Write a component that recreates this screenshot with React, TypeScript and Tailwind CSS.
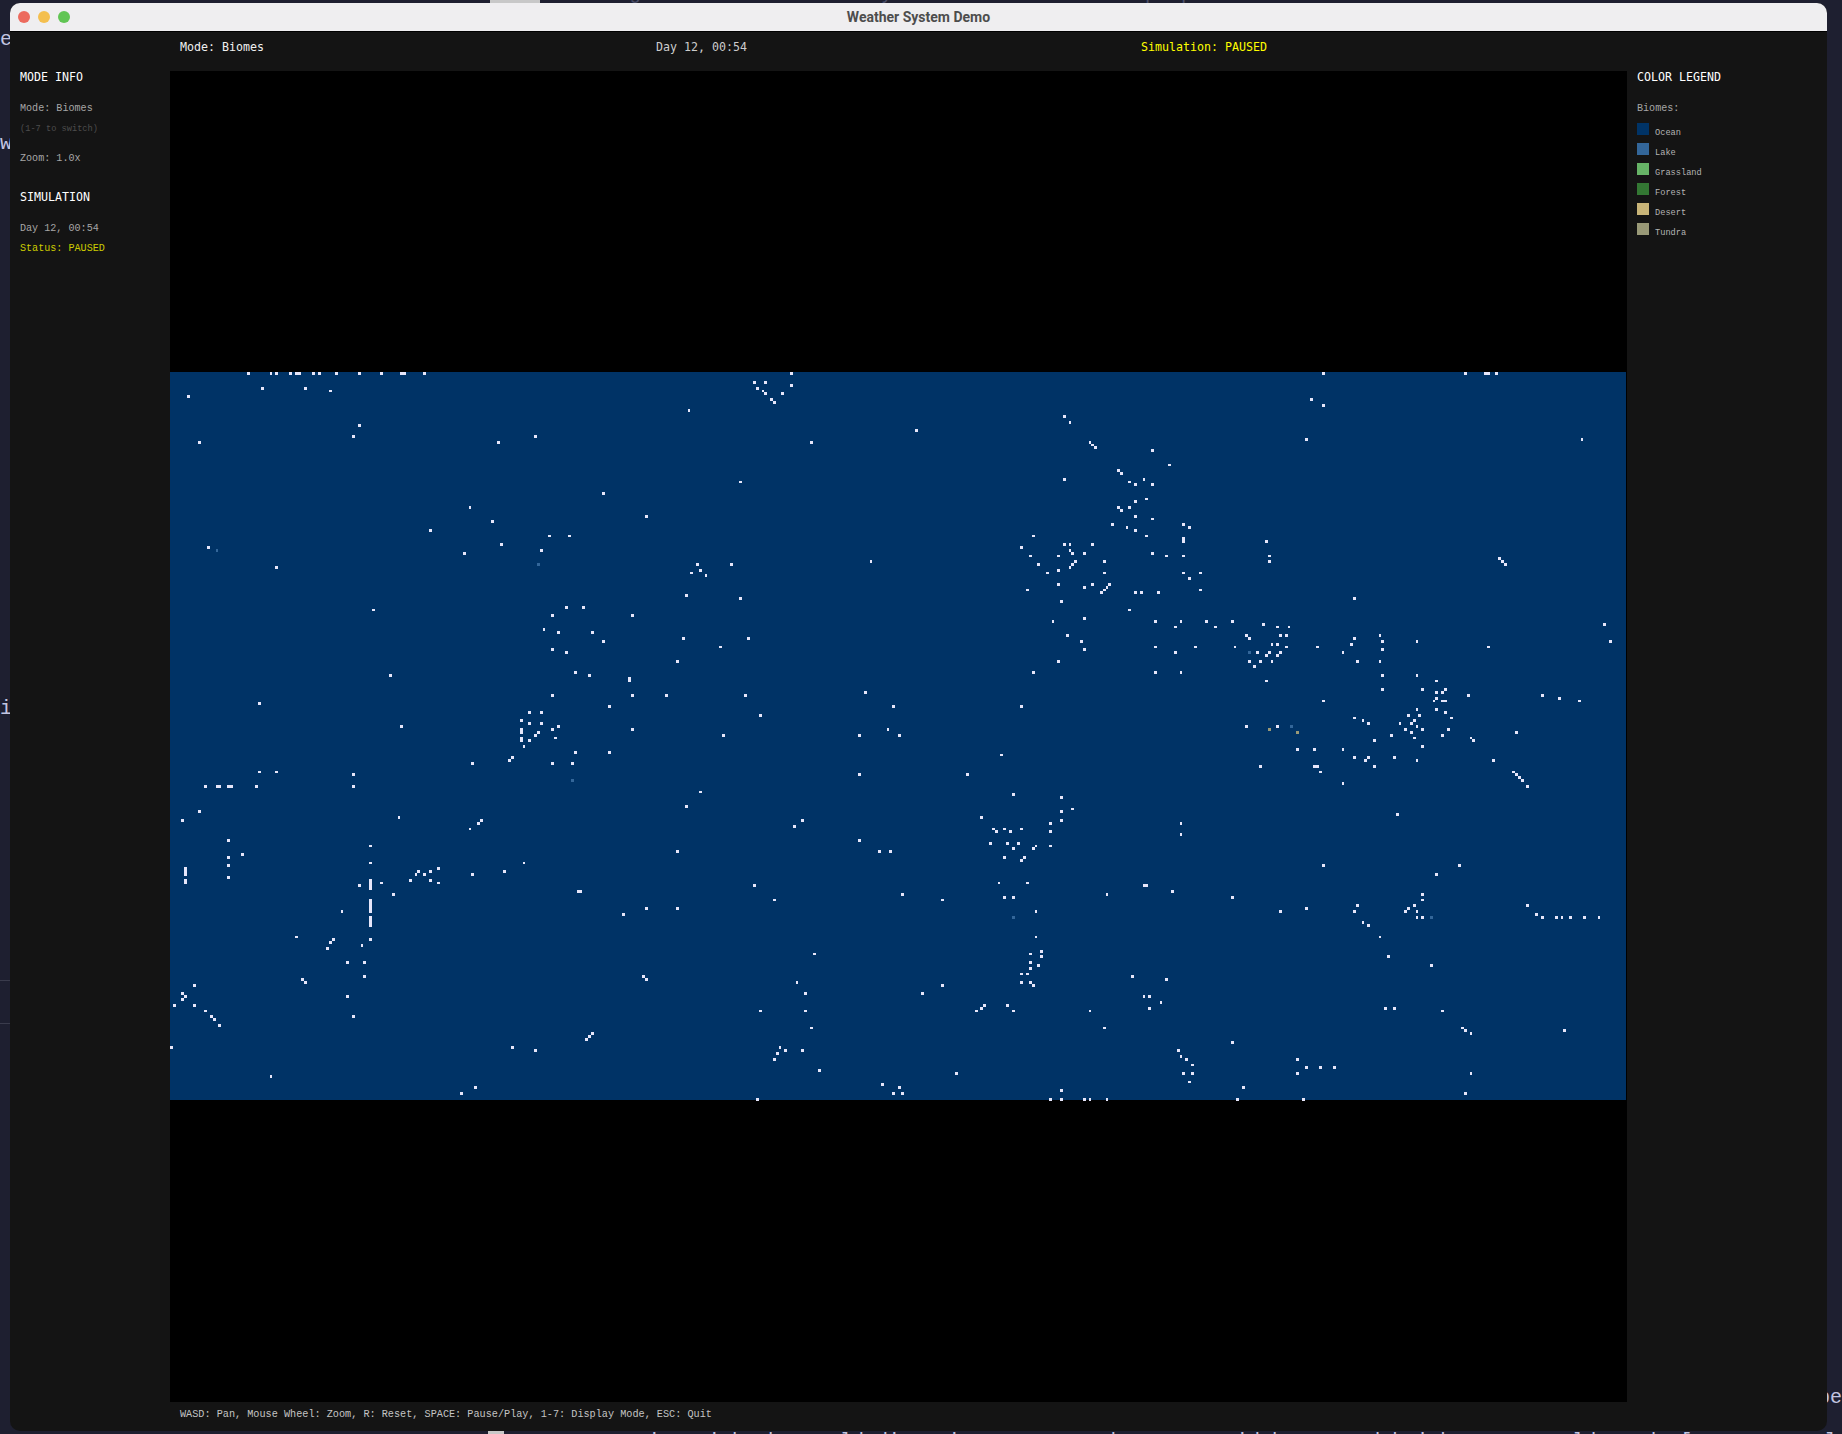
import React from "react";

const S = 2.84375;
type Tile = { ox: number; oy: number; k: number; d: string };

const tiles: Tile[] = [
  { ox: 170, oy: 372, k: 1 / 3, d: "235,4 303,4 319,4 361,4 379,4 388,4 430,4 448,4 499,4 568,4 634,4 694,4 703,4 763,4 277,49 405,49 481,57 55,73 568,160 550,193 88,211 985,211 1096,193 1300,364 1429,433 900,406 967,448 781,475 1138,492 1198,492 115,526 994,517 1114,535 883,543 319,586 610,714 1189,706 1240,706 1147,727 1387,727" },
  { ox: 656, oy: 372, k: 1 / 3, d: "406,4 295,31 328,31 406,40 304,49 319,57 328,64 379,64 346,82 355,91 98,115 781,175 1225,133 1242,151 466,211 1302,211 1309,219 1318,226 1387,295 1396,304 253,330 1225,322 1420,330 1438,337 1438,388 1387,406 1396,415 1420,406 1438,433 1369,457 1411,466 1438,475 1131,492 1096,526 1225,517 1242,517 1309,517 1242,535 1249,543 1285,543 1123,550 1207,550 1258,568 1345,568 644,568 124,577 226,577 1147,577 1249,577 1242,586 133,595 1207,595 106,603 1174,603 1345,603 150,610 91,670 253,679 1207,637 1309,637 1360,637 1285,646 1353,646 1345,654 1114,654 1336,661 1438,661 1455,661 1216,688 1420,714" },
  { ox: 1142, oy: 372, k: 1 / 3, d: "544,4 970,4 1029,4 1037,4 1063,4 508,82 544,100 491,202 1318,202 31,235 82,277 6,322 31,337 13,381 31,441 124,457 142,466 13,492 124,499 124,508 373,508 31,543 73,550 124,550 382,550 382,568 1072,559 1081,568 1090,577 124,603 175,603 142,619 175,654 1,661 49,661 637,679" },
  { ox: 170, oy: 615, k: 1 / 3, d: "1147,3 1387,3 1122,43 1165,52 1267,52 1300,79 1147,103 1189,112 1216,172 1258,181 661,181 1378,189 1378,197 1147,241 1387,241 268,265 1318,274 1078,292 1114,292 1054,316 1078,325 1114,325 694,334 1165,334 1147,343 1387,343 1054,343 1054,351 1105,352 1096,360 1156,367 1054,367 1054,375 1078,376 1062,394 1216,412 1318,412 1027,427 1018,436 907,445 1147,445 1207,445 268,471 319,471 550,478 106,514 139,514 148,514 175,514 184,514 259,514 550,514 88,589 37,616 685,607 934,616 925,625 900,640 175,676 601,692 217,718 175,727" },
  { ox: 656, oy: 615, k: 1 / 3, d: "1285,10 1191,19 1234,61 82,70 277,70 1276,79 193,94 1285,103 64,139 1207,139 1131,172 628,232 31,241 268,241 712,274 1096,274 312,301 696,343 202,360 610,360 730,360 1036,420 610,478 934,478 133,531 1072,538 1216,547 91,574 1249,582 1216,589 976,607 439,616 1216,616 415,633 1183,625 1012,640 1045,640 1096,640 1021,649 1063,649 1183,649 610,676 1003,685 1054,685 1087,685 1138,693 1183,693 1072,700 1131,700 64,709 670,709 703,709 1045,727 1105,727" },
  { ox: 1142, oy: 615, k: 1 / 3, d: "40,19 117,19 193,19 271,19 100,36 219,36 364,28 406,36 441,36 1387,28 313,61 322,70 415,61 433,61 714,61 637,70 721,79 825,79 1405,79 628,87 390,87 406,87 40,94 160,94 279,94 433,94 526,94 1038,94 721,103 100,112 346,112 382,112 415,112 603,112 373,121 406,121 322,139 355,139 390,139 646,139 714,139 337,154 40,172 117,172 721,181 825,181 373,198 883,198 721,223 841,223 910,223 883,232 901,232 979,241 1201,241 883,250 1252,250 544,258 876,258 901,258 910,258 1311,258 825,283 883,283 910,292 799,301 832,301 637,309 928,309 663,316 817,316 679,325 772,325 808,325 825,334 313,334 406,334 790,343 841,343 919,343 1123,352 808,352 748,360 901,360 817,367 987,367 697,376 994,376 841,394 466,403 517,403 603,403 637,427 679,427 757,427 670,436 825,436 1054,436 355,454 517,454 526,454 697,454 535,471 1114,471 1123,478 1132,487 1141,496 1156,514 603,505 765,598 117,625 117,658" },
  { ox: 0, oy: 0, k: 1842 / 1568, d: "194,737 194,746 157,739 157,742 157,745 157,748 157,751 315,735 315,748 315,751 315,754 315,757 315,765 315,768 315,771 315,774 315,777 315,780 315,783 315,786 315,789 315,799 326,752 335,761 306,754 291,775 350,749 353,745 357,741 361,745 365,742 365,748 373,739 373,751 402,744 429,742 446,735 491,759 495,759 530,778 642,754 659,766 550,773 578,774 768,761 802,766 869,733 851,751 875,751 855,764 863,764 881,775 942,761 973,754 977,754 998,758 1049,764 1090,775 1111,773 1126,737 1222,744 1242,737 1155,771 1153,775 1160,785 1164,788 1175,798 1182,814 1218,822 1196,777 1200,773 1203,771 1206,776 1210,762 1210,767 1207,780 1210,780 1300,771 1308,778 1313,780 1326,780 1329,780 1338,780 1349,780 1360,780 252,798 285,801 282,803 278,807 258,833 260,836 295,819 308,806 310,819 310,831 295,848 300,865 155,846 157,848 165,838 148,855 155,851 165,855 175,860 180,866 183,869 186,873 146,891 230,916 436,891 455,894 499,885 502,882 505,880 392,931 404,926 548,831 550,834 693,812 678,837 685,847 685,860 646,860 690,875 683,894 665,891 668,895 662,898 658,902 697,911 751,923 760,931 766,926 768,931 645,935 785,846 802,839 814,914 832,860 835,857 838,855 857,856 862,860 881,797 887,809 887,815 884,822 877,812 877,819 877,825 869,829 875,829 869,836 877,836 879,839 964,831 992,833 975,848 979,848 978,858 988,853 928,860 940,875 1002,894 1006,899 1010,902 1014,907 1007,915 1015,915 1012,922 1049,887 1058,926 1053,935 1104,902 1104,914 1112,909 1124,909 1136,909 1109,935 903,928 893,935 904,935 923,935 928,935 943,935 1179,858 1187,858 1228,860 1245,875 1248,878 1251,879 1253,914 1247,931 1331,877" },
];

const specials: { x: number; y: number; c: string }[] = [
  { x: 170 + 139 / 3, y: 372 + 535 / 3, c: "#336699" },
  { x: 170 + 1105 / 3, y: 372 + 577 / 3, c: "#336699" },
  { x: 170 + 1207 / 3, y: 615 + 496 / 3, c: "#336699" },
  { x: 1142 + 322 / 3, y: 615 + 112 / 3, c: "#336699" },
  { x: 1142 + 448 / 3, y: 615 + 334 / 3, c: "#336699" },
  { x: 1142 + 382 / 3, y: 615 + 343 / 3, c: "#999977" },
  { x: 1142 + 466 / 3, y: 615 + 352 / 3, c: "#999977" },
  { x: 1218 * (1842 / 1568), y: 780 * (1842 / 1568), c: "#336699" },
  { x: 863 * (1842 / 1568), y: 781 * (1842 / 1568), c: "#336699" },
];

function cellRect(rx: number, ry: number) {
  const i = Math.floor((rx - 170) / S);
  const j = Math.min(255, Math.max(0, Math.floor((ry - 372.5) / S)));
  const x = Math.round(i * S);
  const x2 = Math.round((i + 1) * S);
  const y = j === 0 ? 301 : Math.round(301.5 + j * S);
  const y2 = Math.round(301.5 + (j + 1) * S);
  return { key: `${i},${j}`, x, y, w: x2 - x, h: y2 - y };
}

function buildCells() {
  const map = new Map<string, { x: number; y: number; w: number; h: number; c: string }>();
  for (const t of tiles) {
    for (const p of t.d.split(" ")) {
      const [a, b] = p.split(",").map(Number);
      const r = cellRect(t.ox + a * t.k, t.oy + b * t.k);
      map.set(r.key, { x: r.x, y: r.y, w: r.w, h: r.h, c: "#e6e6fa" });
    }
  }
  for (const s of specials) {
    const r = cellRect(s.x, s.y);
    map.set(r.key, { x: r.x, y: r.y, w: r.w, h: r.h, c: s.c });
  }
  return Array.from(map.values());
}

const legend = [
  { n: "Ocean", c: "bg-[#003366]" },
  { n: "Lake", c: "bg-[#336699]" },
  { n: "Grassland", c: "bg-[#66b366]" },
  { n: "Forest", c: "bg-[#337733]" },
  { n: "Desert", c: "bg-[#c8b478]" },
  { n: "Tundra", c: "bg-[#999977]" },
];

const MONO = "font-['Liberation_Mono',monospace]";
const HEAD = "font-['DejaVu_Sans_Mono',monospace] text-[11.63px]";

function WeatherMap() {
  const cells = buildCells();
  return (
    <svg width={1457} height={1331} viewBox="0 0 1457 1331" shapeRendering="crispEdges" className="block">
      <rect x={0} y={301} width={1456} height={728} fill="#003366" />
      {cells.map((c, idx) => (
        <rect key={idx} x={c.x} y={c.y} width={c.w} height={c.h} fill={c.c} />
      ))}
    </svg>
  );
}

export default function App() {
  return (
    <div className={`relative w-[1842px] h-[1434px] overflow-hidden bg-[#1e1f30] pt-[3px] pb-[3px] pl-[10px] pr-[15px] ${MONO}`}>
      {/* terminal text peeking out behind the window */}
      <div className="absolute left-0 top-[-15px] text-[20px] leading-[20px] font-bold whitespace-pre text-[#c3c5e0]">a fewer blue lake areas?</div>
      <div className="absolute left-[490px] top-0 h-[3px] w-[50px] bg-[#c8c8c8]" />
      <div className="absolute left-[545px] top-[-16px] text-[20px] leading-[20px] whitespace-pre text-[#4a4d68]">thinking about the weather system and the biome map update</div>
      <div className="absolute left-0 top-[28px] text-[20px] leading-[24px] text-[#c3c5e0]">e</div>
      <div className="absolute left-0 top-[132px] text-[20px] leading-[24px] text-[#c3c5e0]">w</div>
      <div className="absolute left-0 top-[697px] text-[20px] leading-[24px] text-[#c3c5e0]">i</div>
      <div className="absolute right-0 top-[1386px] text-[20px] leading-[24px] text-[#c3c5e0]">pe</div>
      <div className="absolute left-0 top-[980px] h-px w-[10px] bg-[#3a3b4c]" />
      <div className="absolute left-0 top-[1023px] h-px w-[10px] bg-[#3a3b4c]" />
      <div className="absolute left-[488px] top-[1431px] h-[3px] w-[16px] bg-[#c8c8c8]" />
      <div className="absolute left-[600px] top-[1430px] text-[20px] leading-[24px] whitespace-pre text-[#c3c5e0]">Running with the world dimensions: map seed: 10076, width 512 and height 256, world seed: [17511883431]</div>

      <div className="relative flex flex-col h-full w-full rounded-[10px] overflow-hidden bg-[#141414]">
        <div className="relative flex items-center justify-center h-[29px] shrink-0 bg-[#efeef0] border-b border-black">
          <div className="absolute left-[8px] top-[8px] flex gap-2">
            <span className="w-3 h-3 rounded-full bg-[#ec6a5e]" />
            <span className="w-3 h-3 rounded-full bg-[#f4bf4f]" />
            <span className="w-3 h-3 rounded-full bg-[#61c554]" />
          </div>
          <span className="font-['Roboto',sans-serif] font-bold text-[14px] text-[#4d4d4d]">Weather System Demo</span>
        </div>

        <div className={`flex items-center h-[39px] shrink-0 pl-[170px] leading-[14px] pb-[9px] ${HEAD}`}>
          <span className="w-[476px] text-[#f0f0f0]">Mode: Biomes</span>
          <span className="w-[485px] text-[#cccccc]">Day 12, 00:54</span>
          <span className="text-[#ffff00]">Simulation: PAUSED</span>
        </div>

        <div className="flex flex-1 min-h-0">
          <aside className="w-[160px] shrink-0 pl-[10px] leading-[12px]">
            <div className={`${HEAD} text-white`}>MODE INFO</div>
            <div className="mt-[20px] text-[10.1px] text-[#a6a6a6]">Mode: Biomes</div>
            <div className="mt-[8px] text-[8.67px] text-[#4d4d4d]">(1-7 to switch)</div>
            <div className="mt-[18px] text-[10.1px] text-[#a6a6a6]">Zoom: 1.0x</div>
            <div className={`mt-[26px] ${HEAD} text-white`}>SIMULATION</div>
            <div className="mt-[20px] text-[10.1px] text-[#a6a6a6]">Day 12, 00:54</div>
            <div className="mt-[8px] text-[10.1px] text-[#cccc00]">Status: PAUSED</div>
          </aside>

          <main className="w-[1457px] shrink-0 bg-black">
            <WeatherMap />
          </main>

          <aside className="flex-1 pl-[10px] leading-[12px]">
            <div className={`${HEAD} text-white`}>COLOR LEGEND</div>
            <div className="mt-[20px] text-[10.1px] text-[#a6a6a6]">Biomes:</div>
            <div className="mt-[8px] flex flex-col">
              {legend.map((l) => (
                <div key={l.n} className="flex h-5 items-start gap-[6px]">
                  <span className={`w-3 h-3 shrink-0 ${l.c}`} />
                  <span className="mt-[4px] text-[8.67px] text-[#b3b3b3]">{l.n}</span>
                </div>
              ))}
            </div>
          </aside>
        </div>

        <div className="flex items-center h-[29px] shrink-0 pl-[170px] pb-[3px] text-[10.2px] leading-[12px] text-[#c4c4c4]">
          WASD: Pan, Mouse Wheel: Zoom, R: Reset, SPACE: Pause/Play, 1-7: Display Mode, ESC: Quit
        </div>
      </div>
    </div>
  );
}
